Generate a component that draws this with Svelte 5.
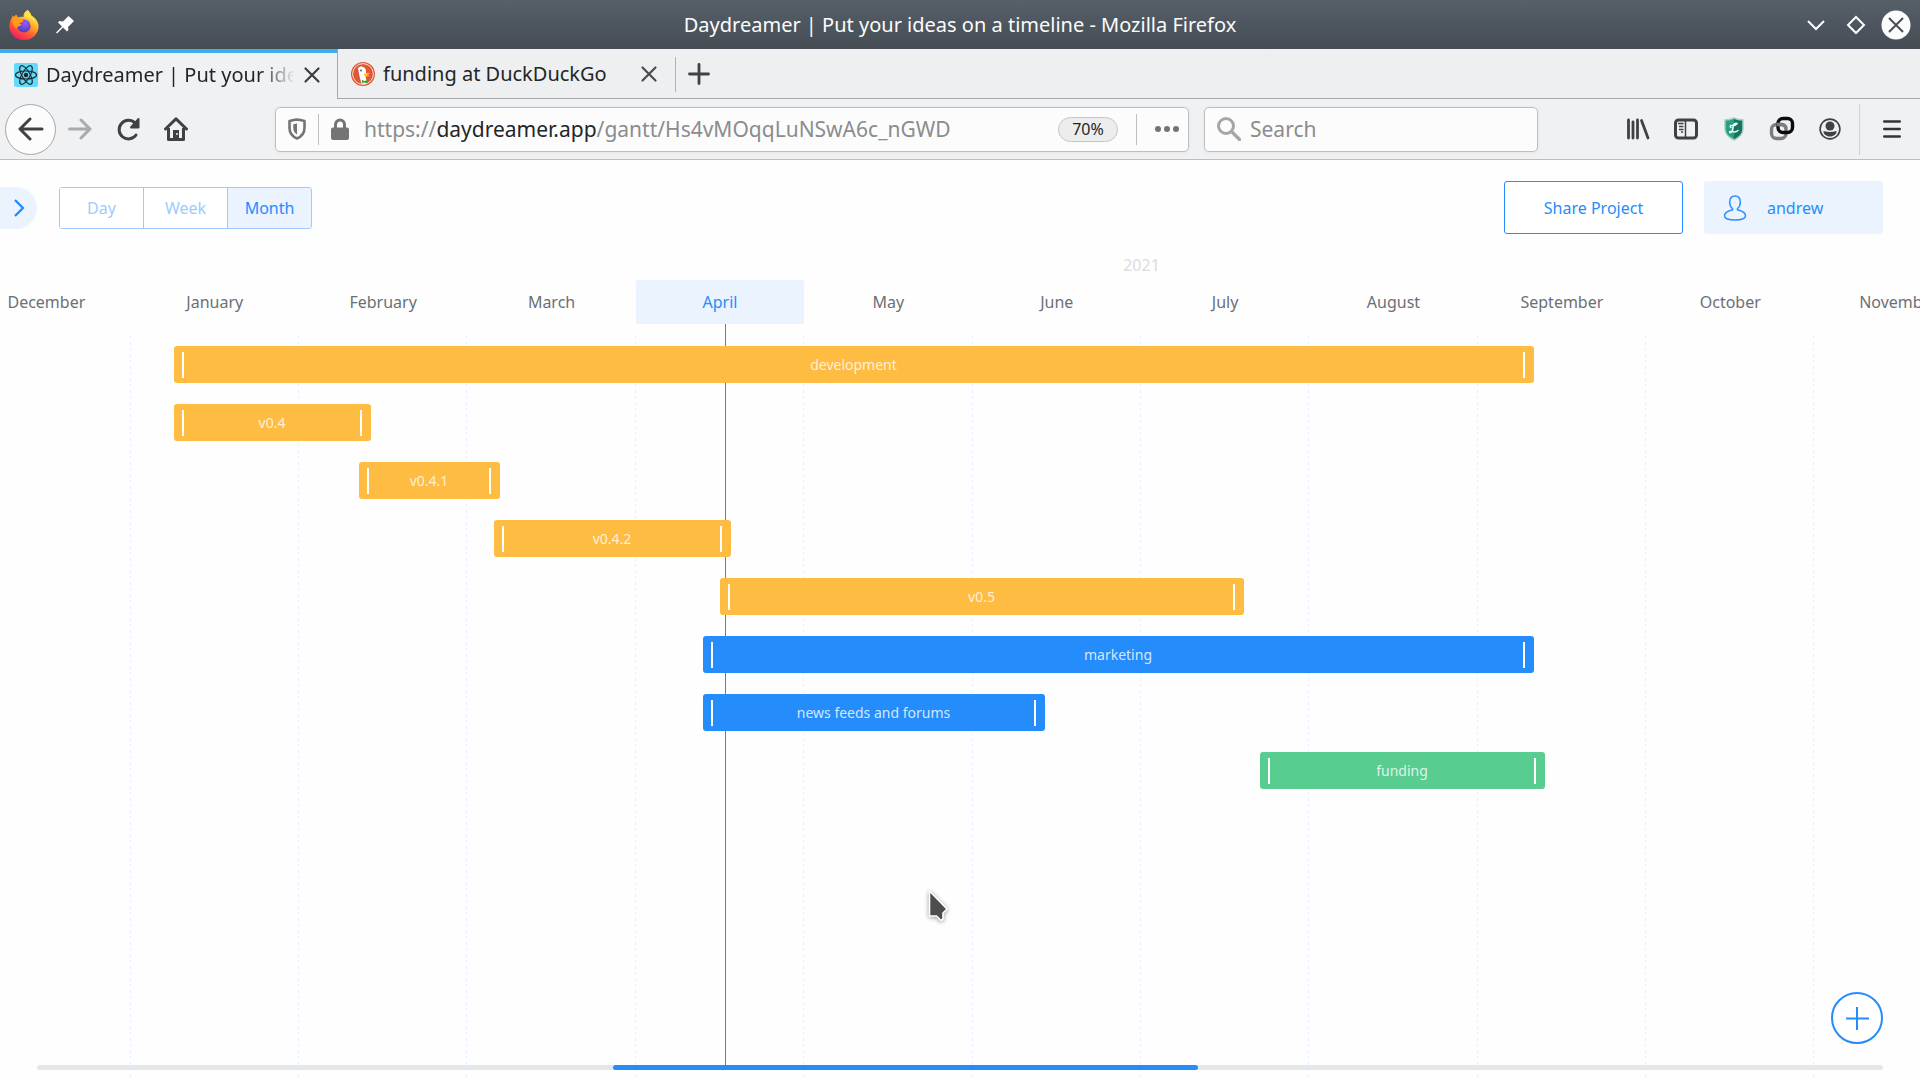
<script>
  const months = ['December', 'January', 'February', 'March', 'April', 'May', 'June', 'July', 'August', 'September', 'October', 'November'];
  const current = 'April';
  const scales = ['Day', 'Week', 'Month'];
  let scale = $state('Month');

  // Timeline geometry in percent of the visible range.
  const monthWidth = 8.771;
  const firstMonth = -1.97;
  const today = 37.74;

  const tasks = [
    { name: 'development', color: 'amber', start: 9.063, length: 70.833 },
    { name: 'v0.4', color: 'amber', start: 9.063, length: 10.26 },
    { name: 'v0.4.1', color: 'amber', start: 18.698, length: 7.344 },
    { name: 'v0.4.2', color: 'amber', start: 25.729, length: 12.344 },
    { name: 'v0.5', color: 'amber', start: 37.5, length: 27.292 },
    { name: 'marketing', color: 'blue', start: 36.615, length: 43.281 },
    { name: 'news feeds and forums', color: 'blue', start: 36.615, length: 17.813 },
    { name: 'funding', color: 'green', start: 65.625, length: 14.844 },
  ];
</script>

<div class="window">
  <header class="titlebar">
    <div class="title-left">
      <svg class="fx" viewBox="0 0 32 32" aria-hidden="true">
        <defs>
          <linearGradient id="fxBody" x1="0.8" y1="0.05" x2="0.25" y2="1">
            <stop offset="0" stop-color="#fff44f" />
            <stop offset="0.35" stop-color="#ffb52e" />
            <stop offset="0.6" stop-color="#ff6a2a" />
            <stop offset="0.85" stop-color="#ff2f52" />
            <stop offset="1" stop-color="#e31587" />
          </linearGradient>
          <radialGradient id="fxGlobe" cx="0.6" cy="0.3" r="0.7">
            <stop offset="0" stop-color="#9a59ff" />
            <stop offset="1" stop-color="#4b3fb8" />
          </radialGradient>
        </defs>
        <path fill="url(#fxBody)" d="M20 0c2 2 3 4 4 6 4 2 7 6 7.500 10.500C32 25 25 32 16 32 7 32 0.500 25.500 0.500 17c0-4 1-7 3-9.500V5.500L6 8l1.500-3 2 3c2-1 4.500-1 6-.500C15 4 17 1.500 20 0z" />
        <circle cx="16" cy="17" r="7" fill="url(#fxGlobe)" />
        <path fill="#ffe14a" d="M20 0c2 2 3 4 4 6 2.500 2.500 4 5.500 4 9-1-2.500-2-4-4-5-2-1.500-5-2-7-2.500C16 4 17.500 1.500 20 0z" />
        <path fill="#ff9a1f" d="M4 8.500 7.500 5l2 3c2.500 0 4 2 6 3.500-1 2-3.500 1.500-4.500 3.500 1 0 2 .500 3 .500-2 2-5 1.500-6 4C4 17 3 12 4 8.500z" />
      </svg>
      <svg class="pin" viewBox="0 0 20 20" aria-hidden="true">
        <path fill="#fff" d="m13.500 1 5.500 5-6 6 .500 3-1.500 1.500-4-4L2 18.500 1 17.500l6-6-4-4L4.500 6l3.500.500z" />
      </svg>
    </div>
    <h1>Daydreamer | Put your ideas on a timeline - Mozilla Firefox</h1>
    <div class="title-right">
      <button class="plain" aria-label="Minimize"><svg width="20" height="28" viewBox="0 0 20 28"><path d="m2 10 8 8 8-8" fill="none" stroke="#fff" stroke-width="2" /></svg></button>
      <button class="plain" aria-label="Maximize"><svg width="20" height="28" viewBox="0 0 20 28"><path d="m10 6 8 8-8 8-8-8z" fill="none" stroke="#fff" stroke-width="2" /></svg></button>
      <button class="plain" aria-label="Close window"><svg width="30" height="30" viewBox="0 0 30 30"><circle cx="15" cy="15" r="14.500" fill="#fcfcfc" /><path d="m8 8 14 14M22 8 8 22" stroke="#475057" stroke-width="2" /></svg></button>
    </div>
  </header>

  <nav class="tabs" aria-label="Tabs">
    <div class="tab active">
      <svg width="24" height="24" viewBox="0 0 24 24" aria-hidden="true">
        <rect width="24" height="24" rx="2.500" fill="#61dafb" />
        <g fill="none" stroke="#1c2a30" stroke-width="1.200">
          <ellipse cx="12" cy="12" rx="10.500" ry="4" />
          <ellipse cx="12" cy="12" rx="10.500" ry="4" transform="rotate(60 12 12)" />
          <ellipse cx="12" cy="12" rx="10.500" ry="4" transform="rotate(120 12 12)" />
        </g>
        <circle cx="12" cy="12" r="2.200" fill="#1c2a30" />
      </svg>
      <span class="tab-text fade">Daydreamer | Put your ideas</span>
      <button class="plain" aria-label="Close tab"><svg width="18" height="18" viewBox="0 0 18 18"><path d="m2.500 2.500 13 13M15.500 2.500l-13 13" stroke="#3b3e40" stroke-width="2.200" stroke-linecap="round" /></svg></button>
    </div>
    <div class="tab">
      <svg width="24" height="24" viewBox="0 0 24 24" aria-hidden="true">
        <circle cx="12" cy="12" r="12" fill="#de5833" />
        <circle cx="12" cy="12" r="10.400" fill="none" stroke="#fff" stroke-opacity="0.800" stroke-width="1" />
        <path fill="#fff" d="M7 6c2-2.500 6-2 7.500 1 1 2 .500 5 0 7l1.500 7.500c-2 .500-4 .500-5.500 0C9 17 8 12 7.500 9z" />
        <path fill="#fdd20a" d="M13 11.500c2-1 4-.500 6-.500-1 1-3 1.500-3 2s2 .200 2.500.500c-1.500 1.200-4.500 1-5.500 0z" />
        <path fill="#3fa535" d="m11 18 2.500 1 3-1v3.500l-3-1-2.500.500z" />
        <circle cx="10" cy="8.500" r="0.900" fill="#2d4f8e" />
      </svg>
      <span class="tab-text">funding at DuckDuckGo</span>
      <button class="plain" aria-label="Close tab"><svg width="18" height="18" viewBox="0 0 18 18"><path d="m2.500 2.500 13 13M15.500 2.500l-13 13" stroke="#4a4d4f" stroke-width="2.200" stroke-linecap="round" /></svg></button>
    </div>
    <button class="plain newtab" aria-label="New tab"><svg width="22" height="22" viewBox="0 0 22 22"><path d="M11 1.500v19M1.500 11h19" stroke="#3f4244" stroke-width="2.800" stroke-linecap="round" /></svg></button>
  </nav>

  <div class="toolbar">
    <div class="navs">
      <button class="plain back" aria-label="Back"><svg width="26" height="24" viewBox="0 0 26 24"><path d="M12 2 2 12l10 10M2.500 12H24" fill="none" stroke="#3f4244" stroke-width="3" stroke-linejoin="round" stroke-linecap="round" /></svg></button>
      <button class="plain" aria-label="Forward" disabled><svg width="24" height="24" viewBox="0 0 24 24"><path d="m13 3 9 9-9 9M22 12H1.500" fill="none" stroke="#a9aaac" stroke-width="3" stroke-linejoin="round" stroke-linecap="round" /></svg></button>
      <button class="plain" aria-label="Reload"><svg width="24" height="24" viewBox="0 0 24 24"><path d="M20 18A9.300 9.300 0 1 1 19 6" fill="none" stroke="#3f4244" stroke-width="3" stroke-linecap="round" /><path d="M22.500 2v8.500H15z" fill="#3f4244" stroke="#3f4244" stroke-width="2" stroke-linejoin="round" /></svg></button>
      <button class="plain" aria-label="Home"><svg width="24" height="24" viewBox="0 0 24 24"><path d="M1.500 12 12 1.800 22.500 12" fill="none" stroke="#3f4244" stroke-width="3" stroke-linecap="round" stroke-linejoin="round" /><path d="M4.500 11v11.500h15V11" fill="none" stroke="#3f4244" stroke-width="3" stroke-linejoin="round" /><path d="M9 13h6v9H9z" fill="#3f4244" /><circle cx="13" cy="17" r="1" fill="#f0f1f3" /></svg></button>
    </div>
    <div class="urlbar">
      <svg width="18" height="22" viewBox="0 0 18 22" aria-hidden="true"><path d="M9 1.500c2.500.200 5 .800 7.500 1.500v7c0 5-3 8.500-7.500 10.500C4.500 18.500 1.500 15 1.500 10V3C4 2.300 6.500 1.700 9 1.500z" fill="none" stroke="#737475" stroke-width="2.600" stroke-linejoin="round" /><path d="M9 5.500v11C6.500 15 5.300 13 5.300 10V6.300z" fill="#737475" /></svg>
      <i class="rule"></i>
      <svg width="18" height="22" viewBox="0 0 18 22" aria-hidden="true"><rect y="9.500" width="18" height="12.500" rx="2" fill="#737475" /><path d="M4.500 11V6.500a4.500 4.500 0 0 1 9 0V11" fill="none" stroke="#737475" stroke-width="3" /></svg>
      <a class="url" href="#gantt">https://<b>daydreamer.app</b>/gantt/Hs4vMOqqLuNSwA6c_nGWD</a>
      <button class="zoom">70%</button>
      <i class="rule"></i>
      <button class="plain" aria-label="Page actions"><svg width="24" height="6" viewBox="0 0 24 6"><g fill="#737475"><circle cx="3" cy="3" r="3" /><circle cx="12" cy="3" r="3" /><circle cx="21" cy="3" r="3" /></g></svg></button>
    </div>
    <label class="search">
      <svg width="24" height="24" viewBox="0 0 24 24" aria-hidden="true"><circle cx="9" cy="9" r="7.500" fill="none" stroke="#a5a6a8" stroke-width="3" /><path d="m14.500 14.500 8 8" stroke="#a5a6a8" stroke-width="3.400" stroke-linecap="round" /></svg>
      <input type="text" placeholder="Search" aria-label="Search" />
    </label>
    <div class="tools">
      <button class="plain" aria-label="Library"><svg width="24" height="24" viewBox="0 0 24 24"><path d="M2.500 3v18M7 5v16M11.500 3v18M15.500 3.500 22 21" stroke="#3f4244" stroke-width="2.800" stroke-linecap="round" /></svg></button>
      <button class="plain" aria-label="Sidebars"><svg width="24" height="24" viewBox="0 0 24 24"><rect x="1.500" y="3" width="21" height="18" rx="3" fill="none" stroke="#3f4244" stroke-width="3" /><path d="M11.500 3v18" stroke="#3f4244" stroke-width="1.500" /><path d="M4 6.500h5.500M5 9.500h4.500M5 12.500h4.500M7 15h2" stroke="#3f4244" stroke-width="1.300" /></svg></button>
      <button class="plain" aria-label="LibreJS"><svg width="20" height="24" viewBox="0 0 20 24"><path d="M10 1c3 1.500 6 2 9 2v9c0 5-4 8.500-9 11C5 20.500 1 17 1 12V3c3 0 6-.500 9-2z" fill="#2a9f84" stroke="#a5cdc3" stroke-width="1.400" /><path d="M10 2c3 1.500 5 1.800 8 1.800V12c0 5-4 8-8 10z" fill="#17735f" /><path d="M7 10.500c-1.500-1-.500-2.500 1.500-2 2.500.500 3.500-.500 4.500-2-2-1-3.500.500-3.800 3-.300 2.500-.700 5-2.400 6-1.300.600-1.800-.900-.300-1.100 2-.200 4 2 7.500-.900" fill="none" stroke="#fff" stroke-width="1.400" stroke-linecap="round" /></svg></button>
      <button class="plain" aria-label="Containers"><svg width="26" height="26" viewBox="0 0 26 26"><rect x="2.500" y="8.500" width="14.500" height="14" rx="5" fill="none" stroke="#7c7d80" stroke-width="3.400" /><rect x="9" y="2.500" width="14.500" height="14" rx="5" fill="none" stroke="#0b0b0c" stroke-width="3.400" /><path d="M7.500 8.500H13a4 4 0 0 1 4 4" fill="none" stroke="#7c7d80" stroke-width="3.400" /></svg></button>
      <button class="plain" aria-label="Account"><svg width="24" height="24" viewBox="0 0 24 24"><circle cx="12" cy="12" r="9.900" fill="none" stroke="#3f4244" stroke-width="1.600" /><circle cx="12" cy="9" r="4.500" fill="#3f4244" /><path d="M5.500 14c1 .200 2.500 1 6.500 1s5.500-.800 6.500-1c.500 3-3 5.500-6.500 5.500S5 17 5.500 14z" fill="#3f4244" /></svg></button>
    </div>
    <div class="menu">
      <button class="plain" aria-label="Menu"><svg width="18" height="20" viewBox="0 0 18 20"><path d="M1.300 2.500h15.400M1.300 10h15.400M1.300 17.500h15.400" stroke="#323536" stroke-width="2.600" stroke-linecap="round" /></svg></button>
    </div>
  </div>

  <main class="app">
    <div class="controls">
      <button class="plain expand" aria-label="Expand panel"><svg width="12" height="18" viewBox="0 0 12 18"><path d="m2 1 8 8-8 8" fill="none" stroke="#1e88fb" stroke-width="2.200" /></svg></button>
      <div class="scales" role="group" aria-label="Scale">
        {#each scales as s}
          <button class:on={scale === s} onclick={() => (scale = s)}>{s}</button>
        {/each}
      </div>
      <button class="share">Share Project</button>
      <button class="user">
        <svg width="24" height="26" viewBox="0 0 24 26" aria-hidden="true"><path d="M12 1c3.500 0 5.300 2.800 5.300 6.300 0 2.700-1 5-2.800 6.200v1.300c4 1 8 2.200 8 6 0 3.200-4.500 4.200-10.500 4.200S1.500 24 1.500 20.800c0-3.800 4-5 8-6v-1.300C7.700 12.300 6.700 10 6.700 7.300 6.700 3.800 8.500 1 12 1z" fill="none" stroke="#2a8efc" stroke-width="1.500" /></svg>
        andrew
      </button>
    </div>

    <section class="timeline" aria-label="Gantt timeline">
      <div class="year">2021</div>
      <div class="months" style="margin-left: {firstMonth}%">
        {#each months as m}
          <div class="month" class:current={m === current} style="flex-basis: {monthWidth}%">{m}</div>
        {/each}
      </div>
      <div class="chart">
        <div class="grid" style="margin-left: {firstMonth}%">
          {#each months as m}
            <div class="col" style="flex-basis: {monthWidth}%"></div>
          {/each}
        </div>
        <div class="today" style="left: {today}%"></div>
        <div class="rows">
          {#each tasks as t}
            <div class="bar {t.color}" style="margin-left: {t.start}%; width: {t.length}%">
              <i></i><span>{t.name}</span><i></i>
            </div>
          {/each}
        </div>
        <div class="scroll"><div class="thumb"></div></div>
      </div>
    </section>

    <button class="plain add" aria-label="Add task"><svg width="52" height="52" viewBox="0 0 52 52"><circle cx="26" cy="26" r="25" fill="#fff" stroke="#258dfb" stroke-width="2" /><path d="M26 15v23M15 26.500h23" stroke="#258dfb" stroke-width="2" /></svg></button>
    <svg class="cursor" width="24" height="36" viewBox="0 0 24 36" aria-hidden="true"><path d="M1.500 1v25h7l4.500 4.500 2-1.500v-6l4-4z" fill="#4d4d4d" stroke="#fff" stroke-width="1.600" /></svg>
  </main>
</div>

<style>
  :global(body) { margin: 0; }
  * { box-sizing: border-box; }
  .window {
    display: flex;
    flex-direction: column;
    min-height: 100vh;
    overflow: hidden;
    font-family: 'Noto Sans', 'Open Sans', sans-serif;
    color: #232627;
    background: #fefefe;
  }
  svg { display: block; flex: none; }
  button { font: inherit; color: inherit; cursor: pointer; }
  .plain { display: flex; align-items: center; justify-content: center; flex: none; padding: 0; border: 0; background: none; }

  .titlebar {
    display: grid;
    grid-template-columns: 1fr auto 1fr;
    align-items: center;
    height: 49px;
    padding: 0 9px;
    background: linear-gradient(#566069, #454c54);
    color: #fcfcfc;
  }
  .titlebar h1 { margin: 0; font-size: 20px; line-height: 28px; font-weight: 400; }
  .title-left { display: flex; align-items: center; gap: 16px; }
  .fx { width: 30px; height: 32px; }
  .pin { width: 20px; height: 20px; }
  .title-right { display: flex; align-items: center; justify-content: flex-end; gap: 20px; }
  .title-right button:last-child { margin-left: -5px; }

  .tabs { display: flex; height: 50px; background: #edeff1; }
  .tab {
    display: flex;
    align-items: center;
    gap: 8px;
    width: 337px;
    padding: 0 17px 0 13px;
    border-bottom: 1px solid #a6a8ab;
  }
  .tab.active { width: 338px; padding: 0 16px 2px 14px; border-top: 4px solid #3daee9; border-bottom: 0; border-right: 1px solid #a6a8ab; background: #f0f1f3; }
  .tab-text { flex: 1; overflow: hidden; white-space: nowrap; font-size: 20px; line-height: 28px; }
  .fade { mask-image: linear-gradient(to left, transparent, #000 36px); }
  .newtab { flex: 1; justify-content: flex-start; padding-left: 13px; border-bottom: 1px solid #a6a8ab; position: relative; }
  .newtab::before { content: ''; position: absolute; left: 0; top: 8px; bottom: 6px; border-left: 1px solid #b0b2b4; }

  .toolbar { display: flex; align-items: center; height: 61px; background: #f0f1f3; border-bottom: 1px solid #bcbec0; }
  .navs { display: flex; align-items: center; gap: 24px; flex: none; width: 275px; padding-left: 5px; }
  .back { width: 51px; height: 51px; margin-right: -12px; border: 1px solid #a4a6a8; border-radius: 50%; background: #fcfcfc; }
  .urlbar, .search { display: flex; align-items: center; height: 45px; min-width: 0; background: #fcfcfc; border: 1px solid #bcbec0; border-radius: 5px; box-shadow: 0 1px 4px #0000000d; }
  .urlbar { flex: 891 1 0; gap: 12px; padding: 0 9px 0 12px; }
  .rule { flex: none; width: 1px; height: 31px; background: #bcbec0; }
  .url { flex: 1; min-width: 0; margin-left: 3px; overflow: hidden; white-space: nowrap; font-size: 21px; line-height: 30px; color: #8a8c8e; text-decoration: none; }
  .url b { font-weight: 400; color: #232627; }
  .zoom { height: 25px; width: 60px; padding: 0; margin-right: 6px; border: 1px solid #c4c6c8; border-radius: 13px; background: #ededee; font-size: 16px; line-height: 22px; }
  .urlbar .plain { margin-left: 6px; }
  .search { flex: 308 1 0; margin-left: 15px; padding: 0 12px; gap: 9px; }
  .search input { flex: 1; min-width: 0; padding: 0; border: 0; outline: 0; background: none; font: inherit; font-size: 21px; line-height: 30px; }
  .search input::placeholder { color: #8a8c8e; opacity: 1; }
  .tools { display: flex; align-items: center; justify-content: flex-end; flex: none; width: 321px; padding-right: 5px; }
  .tools .plain { width: 48px; }
  .menu { display: flex; align-items: center; justify-content: center; flex: none; width: 61px; height: 51px; padding-left: 4px; border-left: 1px solid #d0d2d4; }

  .app { position: relative; display: flex; flex-direction: column; flex: 1; color: #6b7075; font-size: 16px; line-height: 22px; }
  .controls { display: flex; align-items: center; height: 95px; padding-right: 37px; color: #258dfb; }
  .expand { width: 37px; height: 42px; border-radius: 0 21px 21px 0; background: #ebf3ff; }
  .scales { display: flex; width: 253px; margin-left: 22px; margin-right: auto; border: 1px solid #9dcbfd; border-radius: 3px; overflow: hidden; }
  .scales button { flex: 1 1 0; height: 40px; padding: 0; border: 0; background: #fff; color: #9dcbfd; }
  .scales button + button { border-left: 1px solid #9dcbfd; }
  .scales .on { background: #ebf3ff; color: #258dfb; }
  .share, .user { width: 179px; height: 53px; padding: 0; border-radius: 3px; }
  .share { border: 1px solid #258dfb; background: #fff; }
  .user { display: flex; align-items: center; gap: 20px; margin-left: 21px; padding-left: 19px; border: 0; background: #ebf3ff; }

  .timeline { display: flex; flex-direction: column; flex: 1; overflow: hidden; }
  .year { height: 25px; line-height: 20px; padding-left: 58.5%; color: #dadcde; }
  .months { display: flex; width: 100%; }
  .month { flex: none; height: 44px; line-height: 44px; text-align: center; border-radius: 3px; }
  .month.current { background: #ebf3ff; color: #258dfb; }
  .chart { position: relative; display: grid; flex: 1; padding-top: 12px; }
  .grid, .rows { grid-area: 1 / 1; }
  .grid { display: flex; width: 100%; }
  .col { flex: none; background: repeating-linear-gradient(#e8f1ff 0 3px, transparent 3px 6px) right / 1px 100% no-repeat; }
  .rows { position: relative; display: flex; flex-direction: column; gap: 21px; padding: 10px 0 40px; }
  .today { position: absolute; top: 0; bottom: 14px; width: 1px; background: #258dfb; }
  .bar { display: flex; align-items: center; justify-content: space-between; height: 37px; padding: 0 9px 0 8px; border-radius: 3px; color: #ffffffcc; font-size: 14px; line-height: 20px; white-space: nowrap; }
  .bar i { flex: none; width: 2px; height: 26px; background: #fff; }
  .amber { background: #ffbc42; }
  .blue { background: #258dfb; }
  .green { background: #59cd90; }
  .scroll { position: absolute; left: 37px; right: 37px; bottom: 10px; height: 5px; border-radius: 3px; background: #e4e7ea; }
  .thumb { width: 31.7%; height: 100%; margin-left: 31.2%; border-radius: 3px; background: #258dfb; }
  .add { position: absolute; right: 37px; bottom: 36px; }
  .cursor { position: absolute; left: 928px; top: 730px; filter: drop-shadow(0 1px 2px #00000066); }
</style>
